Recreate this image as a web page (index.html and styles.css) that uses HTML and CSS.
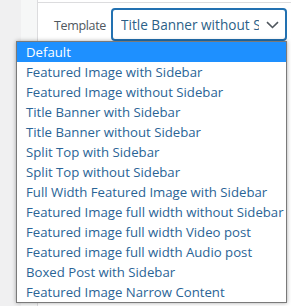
FILE: index.html
```html
<!DOCTYPE html>
<html>
<head>
<meta charset="utf-8">
<link rel="stylesheet" href="styles.css">
</head>
<body>
<div class="page">
  <div class="rail"></div>
  <div class="gutter"></div>
  <div class="panel">
    <div class="divider"></div>
    <div class="row">
      <label class="label">Template</label>
      <div class="select">
        <span class="select-text">Title Banner without Sidebar</span>
        <svg class="chevron" width="13" height="8" viewBox="0 0 13 8"><path d="M1 1.2 L6.5 6.5 L12 1.2" fill="none" stroke="#50575e" stroke-width="1.6"/></svg>
      </div>
    </div>
  </div>
  <ul class="menu">
    <li class="opt active">Default</li>
    <li class="opt">Featured Image with Sidebar</li>
    <li class="opt">Featured Image without Sidebar</li>
    <li class="opt">Title Banner with Sidebar</li>
    <li class="opt">Title Banner without Sidebar</li>
    <li class="opt">Split Top with Sidebar</li>
    <li class="opt">Split Top without Sidebar</li>
    <li class="opt">Full Width Featured Image with Sidebar</li>
    <li class="opt">Featured Image full width without Sidebar</li>
    <li class="opt">Featured image full width Video post</li>
    <li class="opt">Featured image full width Audio post</li>
    <li class="opt">Boxed Post with Sidebar</li>
    <li class="opt">Featured Image Narrow Content</li>
  </ul>
</div>
</body>
</html>
```

FILE: styles.css
```css
html, body {
  margin: 0;
  padding: 0;
  height: 100%;
  overflow: hidden;
}
body {
  font-family: "Open Sans", "Noto Sans", sans-serif;
  background: #f0f0f1;
}
.page {
  position: relative;
  display: flex;
  height: 306px;
}
.rail {
  flex: none;
  width: 21px;
  background: #f0f0f1;
}
.gutter {
  flex: none;
  width: 16px;
  background: #f6f7f7;
  border-right: 1px solid #dcdcde;
}
.panel {
  flex: 1;
  min-width: 0;
  background: #fff;
  padding-top: 2px;
}
.divider {
  height: 1px;
  background: #dcdcde;
}
.row {
  display: flex;
  align-items: center;
  padding: 5px 0 0 16px;
  gap: 9px;
}
.label {
  flex: none;
  width: 48px;
  font-size: 12.5px;
  letter-spacing: -0.35px;
  white-space: nowrap;
  color: #50575e;
  padding-top: 1px;
}
.select {
  flex: 1;
  min-width: 0;
  margin-right: 4px;
  height: 29px;
  border: 2px solid #2271b1;
  border-radius: 4px;
  display: flex;
  align-items: center;
  padding: 0 6px 0 8px;
  overflow: hidden;
  gap: 7px;
}
.select-text {
  flex: 1;
  min-width: 0;
  font-size: 13.6px;
  color: #2c5f87;
  white-space: nowrap;
  overflow: hidden;
}
.chevron {
  flex: none;
}
.menu {
  position: absolute;
  left: 16px;
  top: 41px;
  width: 269px;
  margin: 0;
  padding: 0;
  list-style: none;
  background: #fff;
  border: 1px solid #7a7a7a;
  box-shadow: 0 0 4px rgba(0,0,0,0.35);
}
.opt {
  height: 20px;
  line-height: 21px;
  padding-left: 9px;
  font-size: 13.2px;
  color: #2a6496;
  white-space: nowrap;
}
.opt.active {
  background: #1e90ff;
  color: #fff;
}
```
